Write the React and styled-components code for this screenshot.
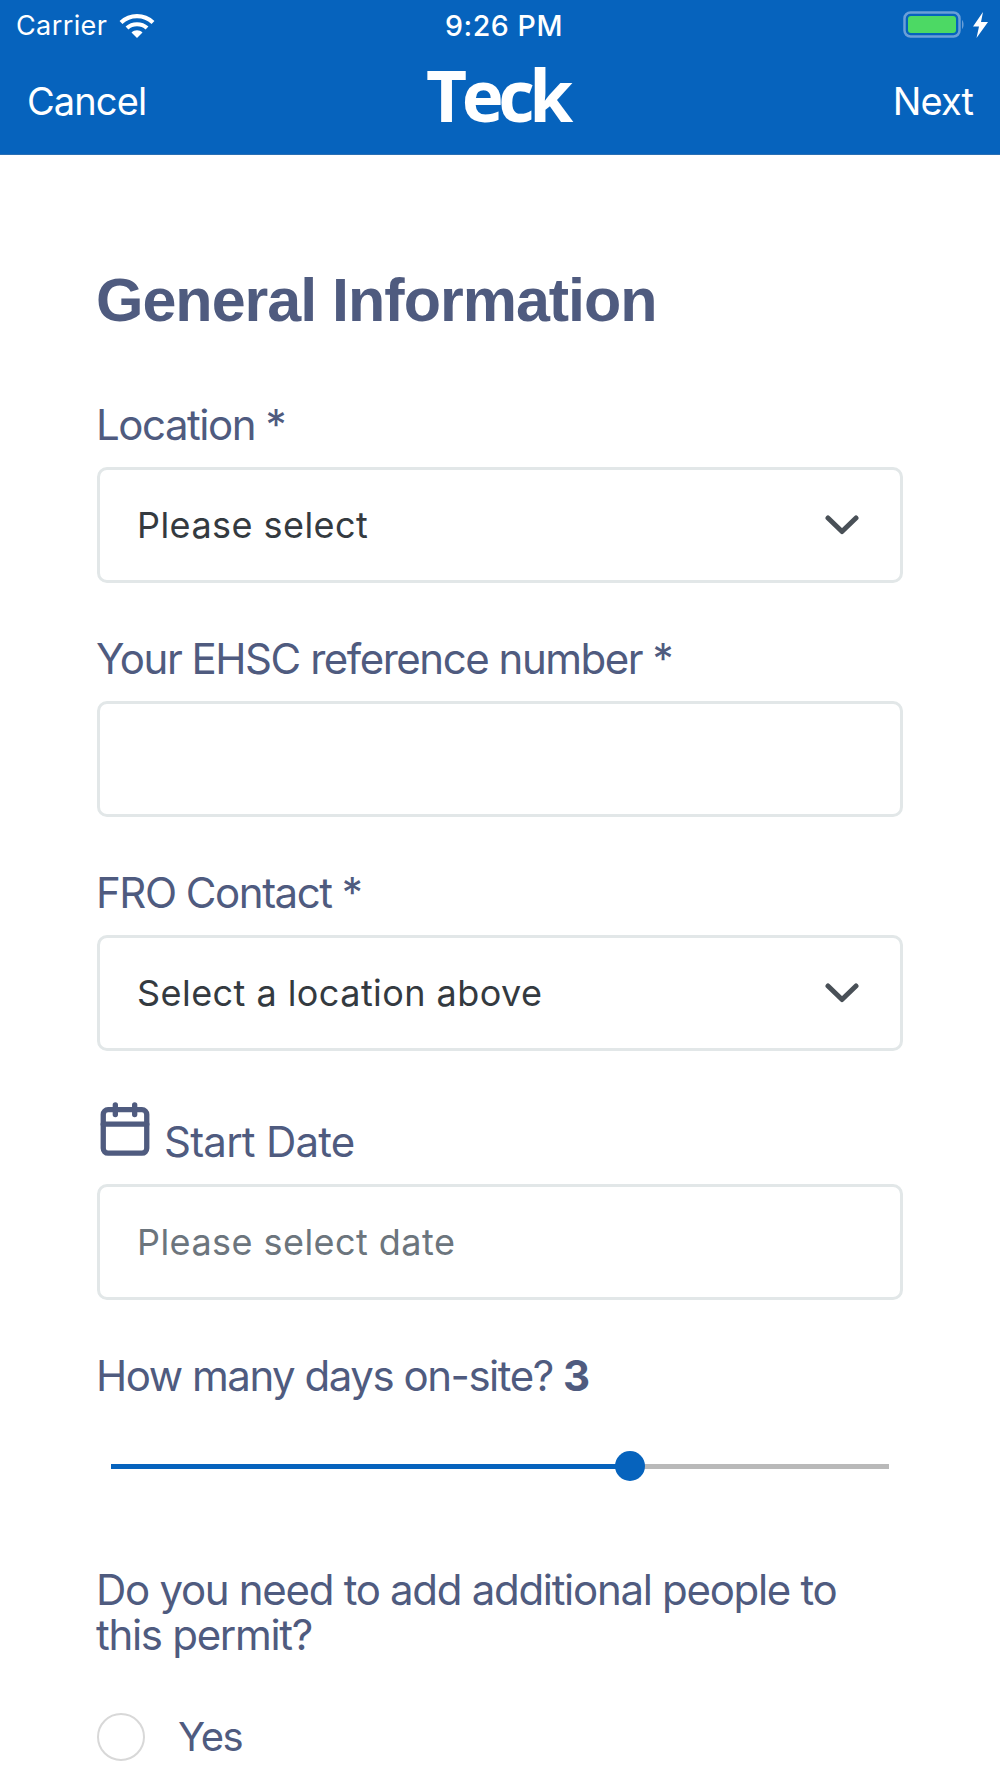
import React from "react";
import styled, { createGlobalStyle } from "styled-components";
import { Calendar } from "lucide-react";

const GlobalStyle = createGlobalStyle`
  html, body {
    margin: 0;
    padding: 0;
    background: #fff;
  }
  * {
    box-sizing: border-box;
  }
`;

const Screen = styled.div`
  width: 1000px;
  height: 1778px;
  overflow: hidden;
  background: #fff;
  font-family: Inter, "Liberation Sans", sans-serif;
`;

const Header = styled.header`
  height: 155px;
  background: #0663bd;
  border-bottom: 1px solid #2a6fb4;
  color: #fff;
  display: flex;
  flex-direction: column;
`;

const StatusBar = styled.div`
  height: 50px;
  padding: 0 12px 0 16px;
  display: grid;
  grid-template-columns: 1fr auto 1fr;
  align-items: center;
  font-size: 27px;
  letter-spacing: 0.4px;
`;

const StatusLeft = styled.div`
  display: flex;
  align-items: center;
  gap: 12px;
`;

const StatusRight = styled.div`
  display: flex;
  justify-content: flex-end;
  align-items: center;
  gap: 8px;
`;

const Clock = styled.span`
  margin-left: 4px;
  font-size: 28.5px;
  font-weight: 500;
  letter-spacing: 0.6px;
`;

const NavBar = styled.nav`
  flex: 1;
  padding: 0 27px 2px;
  display: grid;
  grid-template-columns: 1fr auto 1fr;
  align-items: center;
  font-size: 38px;
  letter-spacing: -0.9px;
`;

const NextLink = styled.span`
  text-align: right;
`;

const Logo = styled.span`
  font-family: "Open Sans", sans-serif;
  font-weight: 700;
  font-size: 71px;
  line-height: 60px;
  letter-spacing: -5.4px;
  margin: 0 0 12px -6px;
`;

const Form = styled.main`
  padding: 0 97px;
  display: flex;
  flex-direction: column;
`;

const Title = styled.h1`
  margin: 115px 0 70px -1px;
  height: 60px;
  font-family: "Liberation Sans", Arial, sans-serif;
  font-size: 61px;
  line-height: 60px;
  font-weight: 700;
  letter-spacing: -1px;
  color: #4f5b7f;
`;

const Field = styled.div`
  margin-bottom: 51px;
`;

const Label = styled.label`
  display: block;
  margin: 0 0 17px -1px;
  font-size: 42px;
  line-height: 50px;
  letter-spacing: -1.47px;
  color: #4f5b7f;

  b {
    font-weight: 700;
  }
`;

const DateLabel = styled(Label)`
  display: flex;
  align-items: flex-end;
  gap: 10px;
  letter-spacing: -0.77px;

  svg {
    margin: -2px 0 9px 0;
    flex: none;
  }
`;

const Control = styled.div`
  height: 116px;
  padding: 0 41px 0 37px;
  border: 3px solid #e2e7e8;
  border-radius: 10px;
  display: flex;
  align-items: center;
  justify-content: space-between;
  font-size: 36px;
  letter-spacing: 0.45px;
  color: ${(p) => (p.$placeholder ? "#6c757d" : "#343a40")};
`;

const SliderWrap = styled.div`
  margin: -27px 14px 77px;
  height: 48px;
  display: flex;
  align-items: center;
`;

const Track = styled.div`
  position: relative;
  flex: 1;
  height: 5px;
  background: #b9b9b9;
`;

const TrackFill = styled.div`
  height: 100%;
  background: #0663bd;
`;

const Thumb = styled.div`
  position: absolute;
  top: 50%;
  width: 30px;
  height: 30px;
  border-radius: 50%;
  background: #0663bd;
  transform: translate(-50%, -50%);
`;

const Question = styled.p`
  margin: 0 0 56px -1px;
  font-size: 42px;
  line-height: 45px;
  letter-spacing: -1.3px;
  color: #4f5b7f;
`;

const RadioRow = styled.div`
  display: flex;
  align-items: center;
  gap: 33px;
  font-size: 40px;
  line-height: 48px;
  letter-spacing: -1.4px;
  color: #4f5b7f;
`;

const RadioCircle = styled.span`
  width: 48px;
  height: 48px;
  border: 2px solid #d8d8d8;
  border-radius: 50%;
`;

function WifiIcon() {
  return (
    <svg width="36" height="25" viewBox="0 0 36 25">
      <path d="M2 9.5 C11 1 25 1 34 9.5" fill="none" stroke="#fff" strokeWidth="4.2" />
      <path d="M8 15 C13.5 10 22.5 10 28 15" fill="none" stroke="#fff" strokeWidth="4.2" />
      <path d="M12.5 19.5 C15.5 16.5 20.5 16.5 23.5 19.5 L18 25 Z" fill="#fff" />
    </svg>
  );
}

function BatteryIcon() {
  return (
    <svg width="62" height="28" viewBox="0 0 62 28">
      <rect x="1.5" y="1.5" width="55" height="24" rx="6" fill="none" stroke="#6a9fd8" strokeWidth="2.5" />
      <rect x="5" y="5" width="48" height="17" rx="3" fill="#4cd964" />
      <path d="M59 9 C61 10.5 61 16.5 59 18 Z" fill="#6a9fd8" />
    </svg>
  );
}

function BoltIcon() {
  return (
    <svg width="15" height="26" viewBox="0 0 15 26">
      <path d="M10 0 L0 14.5 H6 L3.5 26 L15 10 H8 Z" fill="#fff" />
    </svg>
  );
}

function Chevron() {
  return (
    <svg width="34" height="20" viewBox="0 0 34 20">
      <path d="M3 3 L17 16.5 L31 3" fill="none" stroke="#495057" strokeWidth="5" strokeLinecap="round" strokeLinejoin="round" />
    </svg>
  );
}

const days = 3;
const minDays = 1;
const maxDays = 4;

export default function App() {
  const pct = ((days - minDays) / (maxDays - minDays)) * 100;

  return (
    <Screen>
      <GlobalStyle />
      <Header>
        <StatusBar>
          <StatusLeft>
            Carrier
            <WifiIcon />
          </StatusLeft>
          <Clock>9:26 PM</Clock>
          <StatusRight>
            <BatteryIcon />
            <BoltIcon />
          </StatusRight>
        </StatusBar>
        <NavBar>
          <span>Cancel</span>
          <Logo>Teck</Logo>
          <NextLink>Next</NextLink>
        </NavBar>
      </Header>
      <Form>
        <Title>General Information</Title>
        <Field>
          <Label>Location *</Label>
          <Control>
            Please select
            <Chevron />
          </Control>
        </Field>
        <Field>
          <Label>Your EHSC reference number *</Label>
          <Control />
        </Field>
        <Field>
          <Label>FRO Contact *</Label>
          <Control>
            Select a location above
            <Chevron />
          </Control>
        </Field>
        <Field>
          <DateLabel>
            <Calendar size={58} strokeWidth={2.2} color="#4f5b7f" />
            Start Date
          </DateLabel>
          <Control $placeholder>Please select date</Control>
        </Field>
        <Field>
          <Label>
            How many days on-site? <b>{days}</b>
          </Label>
        </Field>
        <SliderWrap>
          <Track>
            <TrackFill style={{ width: `${pct}%` }} />
            <Thumb style={{ left: `${pct}%` }} />
          </Track>
        </SliderWrap>
        <Question>Do you need to add additional people to this permit?</Question>
        <RadioRow>
          <RadioCircle />
          Yes
        </RadioRow>
      </Form>
    </Screen>
  );
}
